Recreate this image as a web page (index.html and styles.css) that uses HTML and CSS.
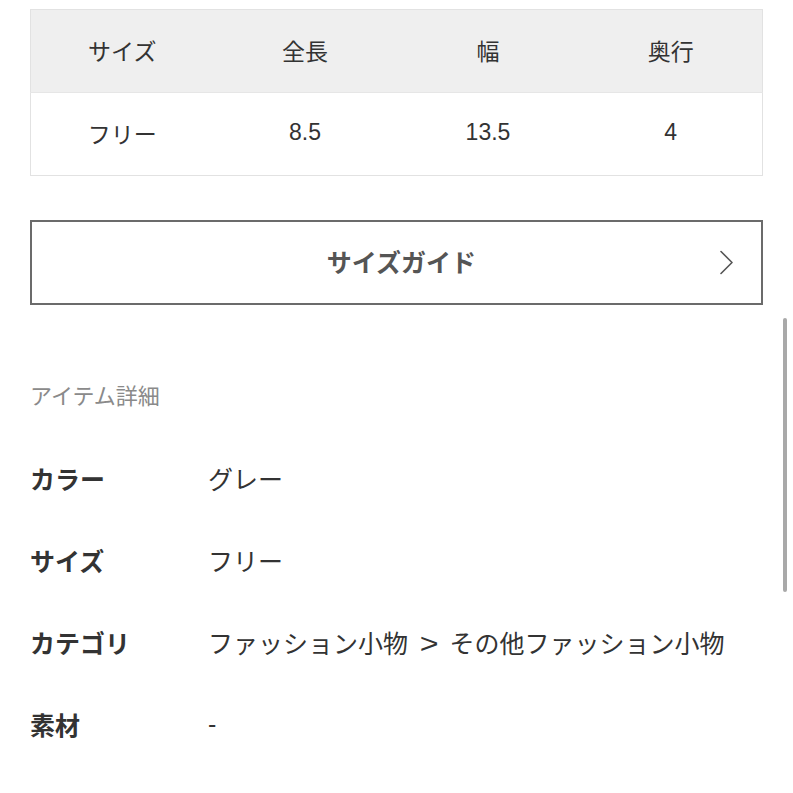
FILE: index.html
```html
<!DOCTYPE html>
<html lang="ja">
<head>
<meta charset="utf-8">
<title>サイズ・アイテム詳細</title>
<link rel="stylesheet" href="styles.css">
</head>
<body>
<main class="page">
  <table class="size-table">
    <thead>
      <tr><th>サイズ</th><th>全長</th><th>幅</th><th>奥行</th></tr>
    </thead>
    <tbody>
      <tr><td>フリー</td><td>8.5</td><td>13.5</td><td>4</td></tr>
    </tbody>
  </table>

  <a class="guide-btn" href="#">
    <span class="guide-label">サイズガイド</span>
    <svg class="chevron" width="16" height="26" viewBox="0 0 16 26" aria-hidden="true">
      <path d="M2 1.5 L13 12.5 L2 23.5" fill="none" stroke="#555" stroke-width="1.6" stroke-linecap="round" stroke-linejoin="round"/>
    </svg>
  </a>

  <h2 class="section-title">アイテム詳細</h2>

  <dl class="details">
    <div class="row"><dt>カラー</dt><dd>グレー</dd></div>
    <div class="row"><dt>サイズ</dt><dd>フリー</dd></div>
    <div class="row"><dt>カテゴリ</dt><dd>ファッション小物<span class="sep">&gt;</span>その他ファッション小物</dd></div>
    <div class="row"><dt>素材</dt><dd>-</dd></div>
    <div class="row"><dt>原産国</dt><dd>中国</dd></div>
  </dl>
</main>
<div class="scrollbar"></div>
</body>
</html>
```

FILE: styles.css
```css
html, body {
  margin: 0;
  padding: 0;
  background: #fff;
}
body {
  font-family: "Liberation Sans", "Noto Sans CJK JP", sans-serif;
  color: #333;
  overflow: hidden;
  height: 793px;
}
.page {
  padding: 9px 30px 0 30px;
}
.size-table {
  width: 100%;
  border-collapse: collapse;
  table-layout: fixed;
  border: 1px solid #e2e2e2;
}
.size-table th,
.size-table td {
  height: 79px;
  padding: 0 0 3px 0;
  text-align: center;
  vertical-align: middle;
  font-size: 23px;
  font-weight: normal;
  color: #333;
}
.size-table th {
  background: #efefef;
}
.size-table td {
  background: #fff;
  border-top: 1px solid #e6e6e6;
}
.guide-btn {
  margin-top: 44px;
  height: 85px;
  box-sizing: border-box;
  border: 2px solid #6b6b6b;
  display: flex;
  align-items: center;
  justify-content: center;
  position: relative;
  text-decoration: none;
  padding: 0 0 3px 10px;
}
.guide-label {
  font-size: 25px;
  font-weight: bold;
  color: #555;
}
.chevron {
  position: absolute;
  right: 26px;
  top: 28px;
}
.section-title {
  margin: 77px 0 0 0;
  font-size: 22px;
  line-height: 30px;
  font-weight: normal;
  color: #8a8a8a;
}
.details {
  margin: 25px 0 0 0;
}
.row {
  display: flex;
  align-items: center;
  height: 82px;
}
.row dt {
  width: 178px;
  flex: none;
  font-size: 25px;
  font-weight: bold;
  color: #333;
}
.row dd {
  margin: 0;
  font-size: 25px;
  color: #333;
}
.sep {
  display: inline-block;
  margin: 0 12px 0 13px;
  font-size: 28px;
  transform: scaleX(1.15);
}
.scrollbar {
  position: fixed;
  left: 783px;
  top: 318px;
  width: 4px;
  height: 274px;
  border-radius: 2px;
  background: #a9a9a9;
}
```
